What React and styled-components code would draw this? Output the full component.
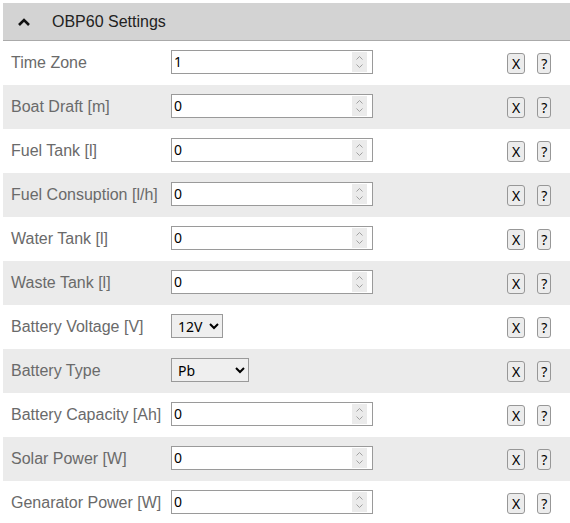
import React from "react";
import styled, { createGlobalStyle } from "styled-components";

const Global = createGlobalStyle`
  html, body { margin: 0; padding: 0; background: #fff; }
  body { font-family: "Liberation Sans", Arial, sans-serif; overflow: hidden; }
  input[type=number]::-webkit-inner-spin-button,
  input[type=number]::-webkit-outer-spin-button { -webkit-appearance: none; margin: 0; }
`;

const Panel = styled.div`
  margin: 3px 0 0 3px;
`;

const Header = styled.div`
  display: flex;
  align-items: center;
  height: 37px;
  background: #d3d3d3;
  border-bottom: 1px solid #aaaaaa;
  font-size: 16px;
  color: #222;
`;

const Chevron = styled.svg`
  width: 14px;
  height: 10px;
  margin: 0 21px 0 14px;
`;

const Row = styled.div`
  display: flex;
  align-items: center;
  height: 44px;
  background: ${(p) => (p.$alt ? "#ebebeb" : "#ffffff")};
`;

const Label = styled.div`
  width: 160px;
  padding-left: 8px;
  font-size: 16px;
  color: #6a6a6a;
  white-space: nowrap;
`;

const Field = styled.div`
  width: 336px;
  display: flex;
  align-items: center;
  margin-bottom: 2px;
`;

const controlFont = `
  font-family: "Noto Sans", "DejaVu Sans", sans-serif;
  font-size: 14px;
  color: #000;
`;

const NumWrap = styled.div`
  position: relative;
  display: flex;
`;

const NumberInput = styled.input`
  ${controlFont}
  width: 202px;
  height: 24px;
  box-sizing: border-box;
  border: 1px solid #9a9a9a;
  padding: 0 2px 2px;
  margin: 0;
`;

const Spinner = styled.svg`
  position: absolute;
  right: 6px;
  top: 2px;
  width: 15px;
  height: 20px;
  pointer-events: none;
`;

const Select = styled.select`
  ${controlFont}
  width: ${(p) => p.$w}px;
  height: 24px;
  box-sizing: border-box;
  border: 1px solid #9a9a9a;
  border-radius: 0;
  margin: 0;
  padding: 0 2px;
`;

const Btn = styled.button`
  ${controlFont}
  height: 21px;
  line-height: 17px;
  padding: 0 ${(p) => p.$pad}px;
  margin-right: ${(p) => p.$mr}px;
  border: 1px solid #979797;
  border-radius: 3px;
  background: #ececec;
  margin-top: 1px;
`;

const rows = [
  { label: "Time Zone", value: "1" },
  { label: "Boat Draft [m]", value: "0" },
  { label: "Fuel Tank [l]", value: "0" },
  { label: "Fuel Consuption [l/h]", value: "0" },
  { label: "Water Tank [l]", value: "0" },
  { label: "Waste Tank [l]", value: "0" },
  { label: "Battery Voltage [V]", select: ["12V", "24V"], w: 52 },
  { label: "Battery Type", select: ["Pb", "Gel", "AGM", "LiFePo4"], w: 78 },
  { label: "Battery Capacity [Ah]", value: "0" },
  { label: "Solar Power [W]", value: "0" },
  { label: "Genarator Power [W]", value: "0" },
];

function NumberField({ value }) {
  return (
    <NumWrap>
      <NumberInput type="number" defaultValue={value} />
      <Spinner viewBox="0 0 15 20">
        <rect x="0" y="0" width="15" height="20" fill="#ebebeb" />
        <path d="M4.5 7.5 L7.5 4.5 L10.5 7.5" fill="none" stroke="#a0a0a0" strokeWidth="1" />
        <path d="M4.5 12.5 L7.5 15.5 L10.5 12.5" fill="none" stroke="#a0a0a0" strokeWidth="1" />
      </Spinner>
    </NumWrap>
  );
}

export default function App() {
  return (
    <>
      <Global />
      <Panel>
        <Header>
          <Chevron viewBox="0 0 14 10">
            <path d="M2 8 L7 3 L12 8" fill="none" stroke="#111" strokeWidth="2.6" />
          </Chevron>
          OBP60 Settings
        </Header>
        {rows.map((r, i) => (
          <Row key={r.label} $alt={i % 2 === 1}>
            <Label>{r.label}</Label>
            <Field>
              {r.select ? (
                <Select $w={r.w} defaultValue={r.select[0]}>
                  {r.select.map((o) => (
                    <option key={o}>{o}</option>
                  ))}
                </Select>
              ) : (
                <NumberField value={r.value} />
              )}
            </Field>
            <Btn $pad={4} $mr={12}>X</Btn>
            <Btn $pad={3} $mr={0}>?</Btn>
          </Row>
        ))}
      </Panel>
    </>
  );
}
